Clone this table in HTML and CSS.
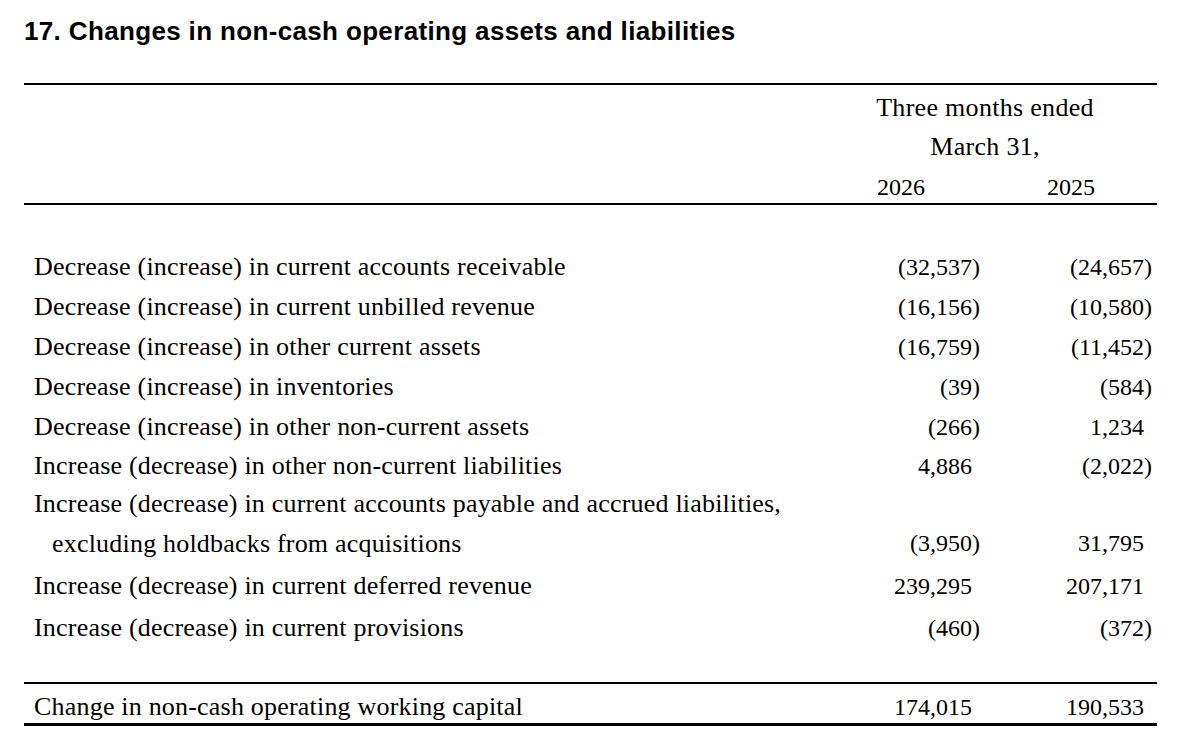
FILE: index.html
```html
<!DOCTYPE html>
<html lang="en">
<head>
    <meta charset="UTF-8">
    <meta name="viewport" content="width=device-width, initial-scale=1.0">
    <title>Note 17 - Changes in non-cash operating assets and liabilities</title>
    <link rel="stylesheet" href="styles.css">
</head>
<body>
    <div class="page">
        <h1 class="note-title">17. Changes in non-cash operating assets and liabilities</h1>

        <table class="fin-table">
            <colgroup>
                <col class="col-label">
                <col class="col-num1">
                <col class="col-num2">
            </colgroup>
            <thead>
                <tr class="head-row head-first">
                    <th></th>
                    <th colspan="2" class="period">Three months ended</th>
                </tr>
                <tr class="head-row">
                    <th></th>
                    <th colspan="2" class="period">March 31,</th>
                </tr>
                <tr class="head-row head-last">
                    <th></th>
                    <th class="year year-1">2026</th>
                    <th class="year year-2">2025</th>
                </tr>
            </thead>
            <tbody>
                <tr class="spacer spacer-top"><td colspan="3"></td></tr>
                <tr>
                    <td class="label">Decrease (increase) in current accounts receivable</td>
                    <td class="num">(32,537)</td>
                    <td class="num">(24,657)</td>
                </tr>
                <tr>
                    <td class="label">Decrease (increase) in current unbilled revenue</td>
                    <td class="num">(16,156)</td>
                    <td class="num">(10,580)</td>
                </tr>
                <tr>
                    <td class="label">Decrease (increase) in other current assets</td>
                    <td class="num">(16,759)</td>
                    <td class="num">(11,452)</td>
                </tr>
                <tr>
                    <td class="label">Decrease (increase) in inventories</td>
                    <td class="num">(39)</td>
                    <td class="num">(584)</td>
                </tr>
                <tr>
                    <td class="label">Decrease (increase) in other non-current assets</td>
                    <td class="num">(266)</td>
                    <td class="num pos">1,234</td>
                </tr>
                <tr class="before-wrap">
                    <td class="label">Increase (decrease) in other non-current liabilities</td>
                    <td class="num pos">4,886</td>
                    <td class="num">(2,022)</td>
                </tr>
                <tr class="wrap-row">
                    <td class="label">Increase (decrease) in current accounts payable and accrued liabilities,<span class="indent">excluding holdbacks from acquisitions</span></td>
                    <td class="num">(3,950)</td>
                    <td class="num pos">31,795</td>
                </tr>
                <tr class="after-wrap">
                    <td class="label">Increase (decrease) in current deferred revenue</td>
                    <td class="num pos">239,295</td>
                    <td class="num pos">207,171</td>
                </tr>
                <tr>
                    <td class="label">Increase (decrease) in current provisions</td>
                    <td class="num">(460)</td>
                    <td class="num">(372)</td>
                </tr>
                <tr class="spacer spacer-bottom"><td colspan="3"></td></tr>
            </tbody>
            <tfoot>
                <tr class="total-row">
                    <td class="label">Change in non-cash operating working capital</td>
                    <td class="num pos">174,015</td>
                    <td class="num pos">190,533</td>
                </tr>
            </tfoot>
        </table>
    </div>
</body>
</html>
```

FILE: styles.css
```css
:root {
    --ink: #000000;
    --paper: #ffffff;
    --rule: #000000;
    --serif: 'Liberation Serif', 'Times New Roman', Times, serif;
    --sans: 'Liberation Sans', Arial, Helvetica, sans-serif;
}

* {
    margin: 0;
    padding: 0;
    box-sizing: border-box;
}

body {
    background-color: var(--paper);
    color: var(--ink);
    font-family: var(--serif);
}

.page {
    width: 1190px;
    padding: 0 33px 0 24px;
}

.note-title {
    font-family: var(--sans);
    font-size: 26px;
    font-weight: 700;
    letter-spacing: 0.35px;
    line-height: 26px;
    padding-top: 18px;
    margin-bottom: 39px;
    white-space: nowrap;
}

/* Table */
.fin-table {
    width: 1133px;
    border-collapse: separate;
    border-spacing: 0;
    font-size: 26px;
    table-layout: fixed;
}

.col-label {
    width: 816px;
}

.col-num1 {
    width: 150px;
}

.col-num2 {
    width: 167px;
}

.fin-table td,
.fin-table th {
    padding: 0;
    font-weight: 400;
    line-height: 40px;
    white-space: nowrap;
    vertical-align: baseline;
}

.head-row th {
    line-height: 39px;
    letter-spacing: 0.3px;
}

.head-first th {
    border-top: 2px solid var(--rule);
    padding-top: 3px;
}

.head-last th {
    line-height: 32px;
    padding-top: 5px;
    border-bottom: 2px solid var(--rule);
}

.period {
    text-align: center;
    padding-right: 27px !important;
}

.year {
    text-align: right;
    font-size: 24px;
    letter-spacing: 0 !important;
}

.year-1 {
    padding-right: 65px !important;
}

.year-2 {
    padding-right: 62px !important;
}

.spacer-top td {
    height: 42px;
}

.spacer-bottom td {
    height: 34px;
}

.label {
    padding-left: 10px !important;
    text-align: left;
    letter-spacing: 0.2px;
}

.indent {
    display: block;
    padding-left: 18px;
    padding-top: 3px;
}

.num {
    text-align: right;
    font-size: 24px;
}

.fin-table td.num:nth-child(2) {
    padding-right: 10px;
}

.fin-table td.num:nth-child(3) {
    padding-right: 5px;
}

/* room for the closing bracket on positive figures */
.fin-table td.num.pos:nth-child(2) {
    padding-right: 18px;
}

.fin-table td.num.pos:nth-child(3) {
    padding-right: 13px;
}

.before-wrap td {
    line-height: 38px;
}

.wrap-row td {
    line-height: 37px;
}

.wrap-row td.num {
    vertical-align: bottom;
}

.after-wrap td {
    padding-top: 4px;
    padding-bottom: 2px;
}

.total-row td {
    border-top: 2px solid var(--rule);
    border-bottom: 3px solid var(--rule);
    line-height: 31px;
    padding-top: 7px;
}
```
